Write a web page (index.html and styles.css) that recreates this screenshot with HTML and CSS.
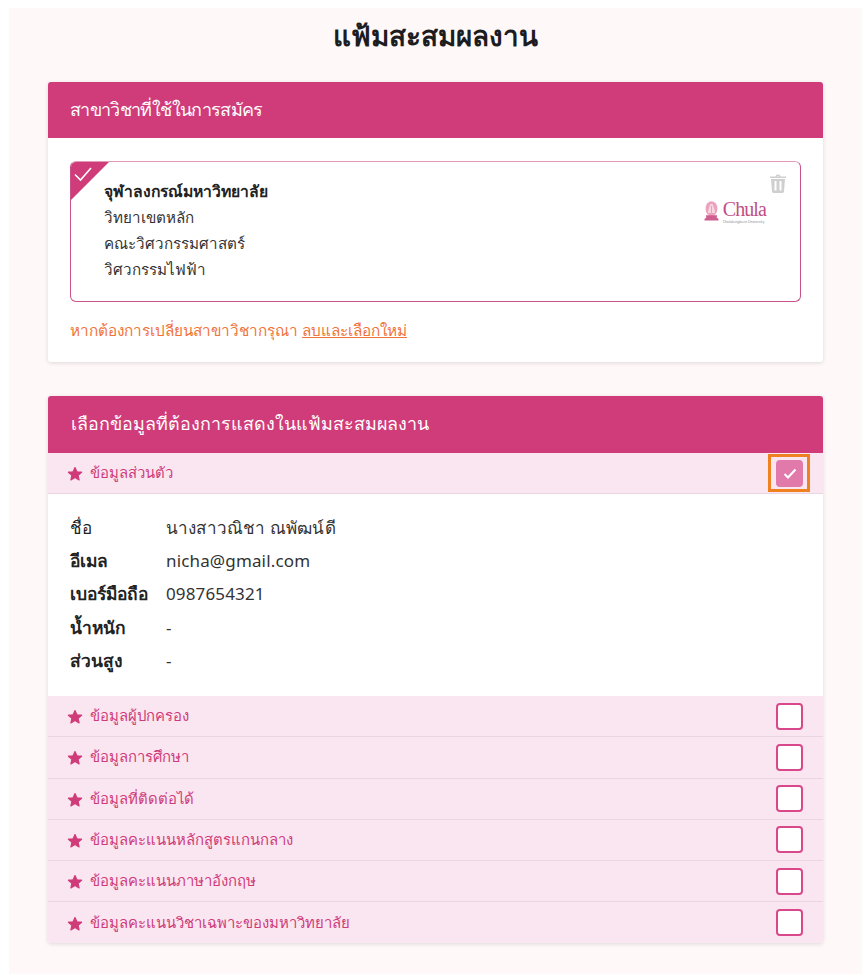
FILE: index.html
```html
<!DOCTYPE html>
<html lang="th">
<head>
<meta charset="utf-8">
<title>แฟ้มสะสมผลงาน</title>
<link rel="stylesheet" href="styles.css">
</head>
<body>
<svg class="defs" width="0" height="0" aria-hidden="true"><defs><path id="star" d="M8 1.500l1.900 4.300 4.700.4-3.500 3.100 1 4.600L8 11.500l-4.100 2.400 1-4.600-3.500-3.100 4.700-.4z" fill="#cf3c79" stroke="#cf3c79" stroke-width="1.200" stroke-linejoin="round"/></defs></svg>
<main class="page">
  <h1 class="title">แฟ้มสะสมผลงาน</h1>

  <section class="card">
    <h2 class="card-head card-head-tight">สาขาวิชาที่ใช้ในการสมัคร</h2>
    <div class="card-body">
      <div class="choice">
        <span class="corner">
          <svg class="corner-check" viewBox="0 0 20 16" width="20" height="16"><path d="M2 8.500l5.500 5.500L18 2" fill="none" stroke="#fff" stroke-width="1.600"/></svg>
        </span>
        <div class="choice-text">
          <strong>จุฬาลงกรณ์มหาวิทยาลัย</strong>
          <span>วิทยาเขตหลัก</span>
          <span>คณะวิศวกรรมศาสตร์</span>
          <span>วิศวกรรมไฟฟ้า</span>
        </div>
        <div class="choice-side">
          <svg class="trash" viewBox="0 0 18 19" width="18" height="19"><path d="M6.500 2.500C6.700 1 7.600.4 9 .4s2.300.6 2.500 2.100H17v1.600H1V2.500zM8 2.500h2C9.900 2 9.600 1.800 9 1.800S8.100 2 8 2.500zM2 5h14l-1 12.500c-.1.900-.6 1.400-1.500 1.400h-9c-.9 0-1.400-.5-1.500-1.400zm3.500 2v9.500h2V7zm5 0v9.500h2V7z" fill="#cfcfcf" fill-rule="evenodd"/></svg>
          <div class="logo">
            <svg class="logo-mark" viewBox="0 0 16 22" width="15" height="22"><ellipse cx="8" cy="8.500" rx="6.300" ry="8" fill="#eba3bd"/><path d="M8 3.500c1.300 0 2 1 2 2.200 0 1 1.500 3 1.800 7.300H4.200C4.500 8.700 6 6.700 6 5.700c0-1.200.7-2.200 2-2.200z" fill="#f8d5e1"/><path d="M8 5.500v7.500" stroke="#e58bad" stroke-width=".8"/><path d="M2 15.500h12l-.5 2.500 2 1.500v1.500H.5v-1.500l2-1.500z" fill="#cf5e8f"/></svg>
            <div class="logo-words">
              <span class="logo-name">Chula</span>
              <span class="logo-sub">Chulalongkorn University</span>
            </div>
          </div>
        </div>
      </div>
      <p class="notice">หากต้องการเปลี่ยนสาขาวิชากรุณา <a class="notice-link" href="#">ลบและเลือกใหม่</a></p>
    </div>
  </section>

  <section class="card card-second">
    <h2 class="card-head">เลือกข้อมูลที่ต้องการแสดงในแฟ้มสะสมผลงาน</h2>
    <div class="row">
      <svg class="star" viewBox="0 0 16 15" width="16" height="15"><use href="#star"/></svg><span class="row-label">ข้อมูลส่วนตัว</span>
      <span class="box box-checked">
        <svg viewBox="0 0 14 11" width="14" height="11"><path d="M1.500 6l3.500 3.500L12.500 1.500" fill="none" stroke="#fff" stroke-width="2.100"/></svg>
      </span>
    </div>
    <dl class="details">
      <dt>ชื่อ</dt><dd>นางสาวณิชา ณพัฒน์ดี</dd>
      <dt class="b">อีเมล</dt><dd>nicha@gmail.com</dd>
      <dt class="b">เบอร์มือถือ</dt><dd>0987654321</dd>
      <dt class="b">น้ำหนัก</dt><dd>-</dd>
      <dt class="b">ส่วนสูง</dt><dd>-</dd>
    </dl>
    <div class="row"><svg class="star" viewBox="0 0 16 15" width="16" height="15"><use href="#star"/></svg><span class="row-label">ข้อมูลผู้ปกครอง</span><span class="box"></span></div>
    <div class="row"><svg class="star" viewBox="0 0 16 15" width="16" height="15"><use href="#star"/></svg><span class="row-label">ข้อมูลการศึกษา</span><span class="box"></span></div>
    <div class="row"><svg class="star" viewBox="0 0 16 15" width="16" height="15"><use href="#star"/></svg><span class="row-label">ข้อมูลที่ติดต่อได้</span><span class="box"></span></div>
    <div class="row"><svg class="star" viewBox="0 0 16 15" width="16" height="15"><use href="#star"/></svg><span class="row-label">ข้อมูลคะแนนหลักสูตรแกนกลาง</span><span class="box"></span></div>
    <div class="row"><svg class="star" viewBox="0 0 16 15" width="16" height="15"><use href="#star"/></svg><span class="row-label">ข้อมูลคะแนนภาษาอังกฤษ</span><span class="box"></span></div>
    <div class="row row-last"><svg class="star" viewBox="0 0 16 15" width="16" height="15"><use href="#star"/></svg><span class="row-label">ข้อมูลคะแนนวิชาเฉพาะของมหาวิทยาลัย</span><span class="box"></span></div>
  </section>
</main>
</body>
</html>
```
FILE: styles.css
```css
* { box-sizing: border-box; }
html, body { margin: 0; background: #fff; }
body {
  padding: 8px 0 0 9px;
  font-family: "Noto Sans", "Liberation Sans", sans-serif;
  color: #222;
}
.defs { position: absolute; }
.page {
  background: #fef9f8;
  height: 966px;
  padding: 0 39px;
}
.title {
  margin: 0;
  height: 74px;
  padding-top: 5px;
  text-align: center;
  font-size: 27.800px;
  line-height: 44px;
  font-weight: 600;
  color: #1d1d1f;
}
.card {
  background: #fff;
  border-radius: 3px;
  overflow: hidden;
  box-shadow: 0 1px 4px rgba(0,0,0,.13);
}
.card-second { margin-top: 34px; }
.card-head {
  margin: 0;
  height: 57px;
  padding: 0 23px;
  background: #cf3c79;
  color: #fff;
  font-size: 17.900px;
  line-height: 55px;
  font-weight: 500;
}
.card-head-tight {
  height: 56px;
  padding: 0 22px;
  font-size: 18px;
  letter-spacing: -.65px;
}
.card-body { padding: 23px 22px 0; height: 224px; }
.choice {
  position: relative;
  display: flex;
  justify-content: space-between;
  height: 141px;
  border: 1px solid #c9528a;
  border-top-color: #e29cba;
  border-radius: 6px;
  overflow: hidden;
}
.corner {
  position: absolute;
  left: 0;
  top: 0;
  width: 38px;
  height: 38px;
  background: #cf3c79;
  clip-path: polygon(0 0, 100% 0, 0 100%);
}
.corner-check { position: absolute; left: 2px; top: 4px; }
.choice-text {
  display: flex;
  flex-direction: column;
  padding: 17px 0 0 33px;
  font-size: 15.200px;
  line-height: 26px;
  color: #333;
}
.choice-text strong { font-size: 15.700px; line-height: 25px; font-weight: 600; color: #222; }
.choice-side {
  display: flex;
  flex-direction: column;
  align-items: flex-end;
  padding: 12px 13px 0 0;
}
.trash { display: block; }
.logo {
  display: flex;
  align-items: flex-end;
  gap: 4px;
  margin: 7px 21px 0 0;
}
.logo-mark { display: block; }
.logo-words { display: flex; flex-direction: column; gap: 3px; margin-bottom: -2px; }
.logo-name {
  font-family: "Liberation Serif", serif;
  font-size: 20px;
  line-height: 16px;
  letter-spacing: -.9px;
  color: #c04f83;
}
.logo-sub {
  font-size: 3.500px;
  line-height: 4px;
  color: #888;
  white-space: nowrap;
}
.notice {
  margin: 16px 0 0;
  font-size: 15.300px;
  line-height: 24px;
  color: #f0743a;
}
.notice-link { color: #f0743a; text-decoration: underline; }
.row {
  display: flex;
  align-items: center;
  height: 41.200px;
  padding: 0 20px 0 19px;
  background: #fae6f1;
  border-bottom: 1px solid #e9d6e0;
}
.row-last { border-bottom: 0; }
.star { flex: none; display: block; margin-top: 1px; }
.row-label { flex: 1; margin-left: 7px; font-size: 14.900px; color: #cf3c79; font-weight: 500; }
.box {
  position: relative;
  display: flex;
  align-items: center;
  justify-content: center;
  width: 27px;
  height: 27px;
  background: #fff;
  border: 2px solid #d9488a;
  border-radius: 4px;
}
.box-checked {
  background: #e279ab;
  border-color: #e279ab;
}
.box-checked::after {
  content: "";
  position: absolute;
  inset: -8px -9px -7px -10px;
  border: 3px solid #f08120;
}
.details {
  display: grid;
  grid-template-columns: 96px 1fr;
  grid-auto-rows: 33.400px;
  margin: 0;
  padding: 16.500px 22px 0;
  height: 202px;
  font-size: 17px;
  line-height: 33px;
}
.details dt { font-weight: 400; color: #222; }
.details dt.b { font-size: 17.400px; font-weight: 600; }
.details dd { margin: 0; color: #333; letter-spacing: .15px; }
```
